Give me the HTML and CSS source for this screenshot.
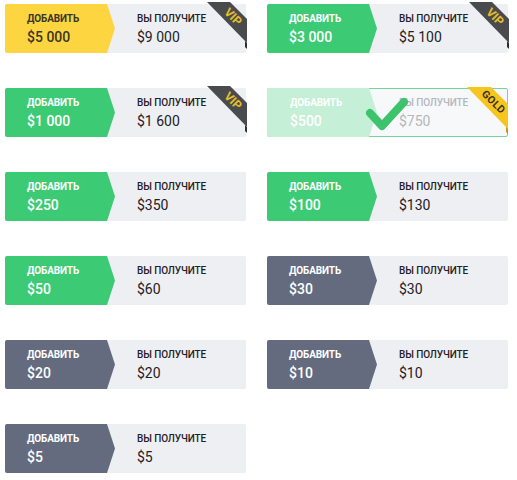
FILE: index.html
```html
<!DOCTYPE html>
<html lang="ru">
<head>
<meta charset="utf-8">
<title>Пополнение</title>
<link rel="stylesheet" href="styles.css">
</head>
<body>
<div class="grid">
  <div class="card">
    <div class="add yellow"><span class="lbl">ДОБАВИТЬ</span><span class="amt">$5 000</span></div>
    <div class="get"><span class="lbl">ВЫ ПОЛУЧИТЕ</span><span class="amt">$9 000</span></div>
    <svg class="ribbon" viewBox="0 0 44 50" width="44" height="50"><polygon class="fold" points="41,40 43,42 43,48 41,46"/><polygon class="band vip" points="3,1 26,1 43,18 43,42"/><text class="rtext vip-t" x="29" y="16" transform="rotate(45 29 16)">VIP</text></svg>
  </div>
  <div class="card">
    <div class="add green"><span class="lbl">ДОБАВИТЬ</span><span class="amt">$3 000</span></div>
    <div class="get"><span class="lbl">ВЫ ПОЛУЧИТЕ</span><span class="amt">$5 100</span></div>
    <svg class="ribbon" viewBox="0 0 44 50" width="44" height="50"><polygon class="fold" points="41,40 43,42 43,48 41,46"/><polygon class="band vip" points="3,1 26,1 43,18 43,42"/><text class="rtext vip-t" x="29" y="16" transform="rotate(45 29 16)">VIP</text></svg>
  </div>
  <div class="card">
    <div class="add green"><span class="lbl">ДОБАВИТЬ</span><span class="amt">$1 000</span></div>
    <div class="get"><span class="lbl">ВЫ ПОЛУЧИТЕ</span><span class="amt">$1 600</span></div>
    <svg class="ribbon" viewBox="0 0 44 50" width="44" height="50"><polygon class="fold" points="41,40 43,42 43,48 41,46"/><polygon class="band vip" points="3,1 26,1 43,18 43,42"/><text class="rtext vip-t" x="29" y="16" transform="rotate(45 29 16)">VIP</text></svg>
  </div>
  <div class="card selected">
    <div class="add green-light"><span class="lbl">ДОБАВИТЬ</span><span class="amt">$500</span></div>
    <div class="get"><span class="lbl">ВЫ ПОЛУЧИТЕ</span><span class="amt">$750</span></div>
    <svg class="check" viewBox="0 0 44 40" width="44" height="40"><polyline points="5,17 17,30 39,6"/></svg>
    <svg class="ribbon" viewBox="0 0 44 50" width="44" height="50"><polygon class="fold gold-fold" points="41,40 43,42 43,48 41,46"/><polygon class="band gold" points="2,1 26,1 43,18 43,43"/><text class="rtext gold-t" x="28.5" y="16" transform="rotate(45 28.5 16)">GOLD</text></svg>
  </div>
  <div class="card">
    <div class="add green"><span class="lbl">ДОБАВИТЬ</span><span class="amt">$250</span></div>
    <div class="get"><span class="lbl">ВЫ ПОЛУЧИТЕ</span><span class="amt">$350</span></div>
  </div>
  <div class="card">
    <div class="add green"><span class="lbl">ДОБАВИТЬ</span><span class="amt">$100</span></div>
    <div class="get"><span class="lbl">ВЫ ПОЛУЧИТЕ</span><span class="amt">$130</span></div>
  </div>
  <div class="card">
    <div class="add green"><span class="lbl">ДОБАВИТЬ</span><span class="amt">$50</span></div>
    <div class="get"><span class="lbl">ВЫ ПОЛУЧИТЕ</span><span class="amt">$60</span></div>
  </div>
  <div class="card">
    <div class="add slate"><span class="lbl">ДОБАВИТЬ</span><span class="amt">$30</span></div>
    <div class="get"><span class="lbl">ВЫ ПОЛУЧИТЕ</span><span class="amt">$30</span></div>
  </div>
  <div class="card">
    <div class="add slate"><span class="lbl">ДОБАВИТЬ</span><span class="amt">$20</span></div>
    <div class="get"><span class="lbl">ВЫ ПОЛУЧИТЕ</span><span class="amt">$20</span></div>
  </div>
  <div class="card">
    <div class="add slate"><span class="lbl">ДОБАВИТЬ</span><span class="amt">$10</span></div>
    <div class="get"><span class="lbl">ВЫ ПОЛУЧИТЕ</span><span class="amt">$10</span></div>
  </div>
  <div class="card">
    <div class="add slate"><span class="lbl">ДОБАВИТЬ</span><span class="amt">$5</span></div>
    <div class="get"><span class="lbl">ВЫ ПОЛУЧИТЕ</span><span class="amt">$5</span></div>
  </div>
</div>
</body>
</html>
```
FILE: styles.css
```css
html, body {
  margin: 0;
  padding: 0;
  background: #ffffff;
  font-family: Roboto, "Liberation Sans", Arial, sans-serif;
}

.grid {
  display: grid;
  grid-template-columns: 241px 241px;
  grid-auto-rows: 49px;
  column-gap: 21px;
  row-gap: 35px;
  padding: 4px 0 0 5px;
}

.card {
  position: relative;
  display: flex;
  background: #eeeff3;
  border-radius: 2px;
  box-sizing: border-box;
}

.add {
  width: 110px;
  flex: none;
  display: flex;
  flex-direction: column;
  justify-content: center;
  padding-left: 22px;
  padding-top: 2px;
  box-sizing: border-box;
  clip-path: polygon(0 0, 102px 0, 110px 50%, 102px 100%, 0 100%);
  border-radius: 2px 0 0 2px;
  color: #ffffff;
}

.yellow { background: #fdd540; color: #3b3626; }
.green { background: #3dca74; }
.slate { background: #646b7f; }
.green-light { background: #c5efd6; }

.get {
  flex: 1;
  display: flex;
  flex-direction: column;
  justify-content: center;
  padding-left: 22px;
  padding-top: 2px;
  color: #1f2125;
}

.lbl {
  font-size: 10px;
  font-weight: 700;
  line-height: 12px;
  letter-spacing: -0.1px;
}

.get .lbl { font-weight: 500; }

.amt {
  font-size: 14px;
  font-weight: 500;
  line-height: 17px;
  margin-top: 4px;
}

.get .amt { font-weight: 400; }

.selected {
  border: 1px solid #74d49a;
  background: #f6f8fa;
}
.selected .add { margin: -1px 0 -1px -1px; width: 111px; padding-left: 23px; color: #ffffff; }
.selected .get { color: #b4b7bc; padding-left: 21px; }

.check {
  position: absolute;
  left: 97px;
  top: 7px;
}
.check polyline {
  fill: none;
  stroke: #3cc36c;
  stroke-width: 8;
  stroke-linecap: round;
  stroke-linejoin: round;
}

.ribbon {
  position: absolute;
  right: -2px;
  top: -3px;
  overflow: visible;
}
.band.vip { fill: #4a4b4d; }
.band.gold { fill: #f6c51e; }
.fold { fill: #2f3031; }
.gold-fold { fill: #c99a08; }
.rtext {
  font-family: Roboto, "Liberation Sans", Arial, sans-serif;
  font-weight: 700;
  font-size: 12px;
  text-anchor: middle;
  dominant-baseline: central;
}
.vip-t { fill: #e3bd2a; }
.gold-t { fill: #3a3320; font-size: 10.5px; letter-spacing: 0.3px; }
```
